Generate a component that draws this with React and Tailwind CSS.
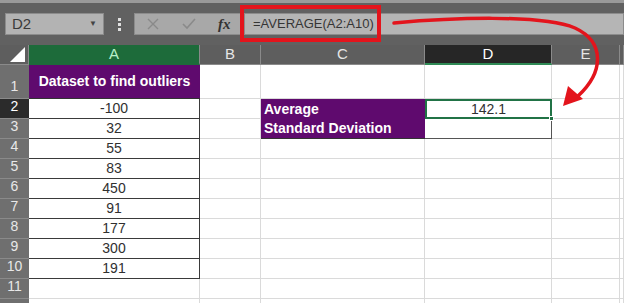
import React from 'react';

const cols = ['A', 'B', 'C', 'D', 'E', 'F'];
const data = ['-100', '32', '55', '83', '450', '91', '177', '300', '191'];

const Cell = ({ className = '', children }) => (
  <div className={`border-r border-b border-[#dadada] flex items-center text-[14px] text-[#303030] ${className}`}>
    {children}
  </div>
);

const RowHead = ({ n, active }) => (
  <div
    className={`flex items-end justify-center pb-[1px] text-[14px] border-b border-[#8a8a8a] ${
      active ? 'bg-[#2b2b2b] text-white' : 'bg-[#6f6f6f] text-[#e8e8e8]'
    }`}
  >
    {n}
  </div>
);

const FormulaBar = () => (
  <div className="h-[45px] bg-[#616161] border-t-[3px] border-[#9a9a9a] flex items-start pt-[10px] pl-[5px]">
    <div className="w-[99px] h-[22px] bg-[#b3b3b3] border border-[#8c8c8c] flex items-center justify-between px-[6px] text-[15px] text-[#3a3a3a]">
      <span>D2</span>
      <span className="text-[8px] text-[#444]">▼</span>
    </div>
    <div className="w-[30px] h-[22px] flex flex-col items-center justify-center gap-[2px]">
      <span className="w-[3px] h-[3px] bg-[#e0e0e0]" />
      <span className="w-[3px] h-[3px] bg-[#e0e0e0]" />
      <span className="w-[3px] h-[3px] bg-[#e0e0e0]" />
    </div>
    <div className="w-[108px] h-[22px] bg-[#a8a8a8] border border-[#8c8c8c] flex items-center justify-around text-[#8a8a8a]">
      <svg width="14" height="14" viewBox="0 0 14 14">
        <path d="M2 2L12 12M12 2L2 12" stroke="#8a8a8a" strokeWidth="1.4" />
      </svg>
      <svg width="16" height="14" viewBox="0 0 16 14">
        <path d="M2 7L6 11L14 2" stroke="#8a8a8a" strokeWidth="1.6" fill="none" />
      </svg>
      <span className="italic font-bold text-[15px] text-[#333]" style={{ fontFamily: '"Liberation Serif", serif' }}>
        fx
      </span>
    </div>
    <div className="flex-1 ml-[2px] h-[22px] bg-[#b5b5b5] border border-[#8c8c8c] flex items-center pl-[8px] text-[13px] text-[#353535]">
      =AVERAGE(A2:A10)
    </div>
  </div>
);

export default function App() {
  const rows = Array.from({ length: 11 }, (_, i) => i + 2);

  return (
    <div className="relative w-[624px] h-[303px] overflow-hidden bg-white" style={{ fontFamily: '"Liberation Sans", Arial, sans-serif' }}>
      <FormulaBar />

      <div className="grid grid-cols-[29px_171px_61px_164px_127px_68px_1fr] grid-rows-[20px_34px_repeat(11,20px)]">
        {/* header row */}
        <div className="bg-[#5e5e5e] relative border-r border-b border-[#8a8a8a]">
          <div className="absolute right-[3px] bottom-[2px] w-0 h-0 border-l-[15px] border-l-transparent border-b-[15px] border-b-white" />
        </div>
        {cols.map((c) => (
          <div
            key={c}
            className={`flex items-center justify-center text-[15px] border-r border-[#8a8a8a] ${
              c === 'A'
                ? 'bg-[#1d6b3a] text-[#b8f0c8] border-b-2 border-b-[#1d6b3a]'
                : c === 'D'
                ? 'bg-[#262626] text-white border-b-2 border-b-[#2f8a55]'
                : 'bg-[#5e5e5e] text-[#e6e6e6] border-b border-b-[#8a8a8a]'
            }`}
          >
            {c === 'F' ? '' : c}
          </div>
        ))}

        {/* row 1 */}
        <RowHead n={1} />
        <div className="bg-[#5f0a6e] text-white font-bold text-[14px] flex items-center justify-center border-b border-[#333]">
          Dataset to find outliers
        </div>
        <Cell />
        <Cell />
        <Cell />
        <Cell />
        <Cell />

        {rows.map((r) => {
          const val = data[r - 2];
          return (
            <React.Fragment key={r}>
              <RowHead n={r < 12 ? r : ''} active={r === 2} />
              {val !== undefined ? (
                <div className="border-b border-r border-[#3a3a3a] flex items-center justify-center text-[14px] text-[#303030]">
                  {val}
                </div>
              ) : (
                <Cell />
              )}
              <Cell />
              {r === 2 || r === 3 ? (
                <div className={`bg-[#5f0a6e] text-white font-bold text-[14px] flex items-center pl-[3px] ${r === 3 ? 'border-b border-[#333]' : ''}`}>
                  {r === 2 ? 'Average' : 'Standard Deviation'}
                </div>
              ) : (
                <Cell />
              )}
              {r === 2 ? (
                <div className="relative border-2 border-[#217346] flex items-center justify-center text-[14px] text-[#303030]">
                  142.1
                  <span className="absolute -right-[4px] -bottom-[4px] w-[5px] h-[5px] bg-[#217346] border border-white" />
                </div>
              ) : r === 3 ? (
                <div className="border-r border-b border-[#555]" />
              ) : (
                <Cell />
              )}
              <Cell />
              <Cell />
            </React.Fragment>
          );
        })}
      </div>

      {/* annotations */}
      <div className="absolute left-[240px] top-[5px] w-[141px] h-[37px] border-[4px] border-[#e3141c]" />
      <svg className="absolute left-0 top-0" width="624" height="303" viewBox="0 0 624 303">
        <path
          d="M394 23 C450 18, 540 14, 575 28 C605 42, 604 72, 578 96"
          stroke="#e3141c"
          strokeWidth="3.5"
          fill="none"
          strokeLinecap="round"
        />
        <path d="M563 106 L568 86 L583 99 Z" fill="#e3141c" />
      </svg>
    </div>
  );
}
